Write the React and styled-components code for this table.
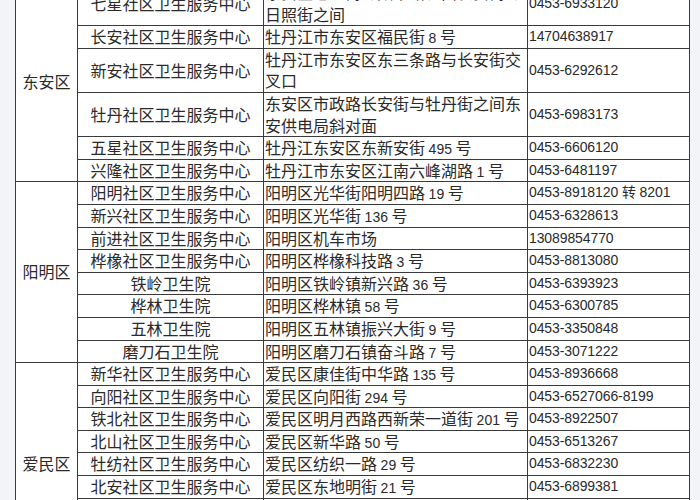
import React from "react";
import styled, { createGlobalStyle } from "styled-components";

const GlobalStyle = createGlobalStyle`
  html, body {
    margin: 0;
    padding: 0;
    background: #f3f4f7;
    overflow: hidden;
  }
`;

const Page = styled.div`
  width: 700px;
  height: 500px;
  overflow: hidden;
  background: #f3f4f7;
`;

const Sheet = styled.table`
  margin: -19px 0 0 15px;
  width: 674px;
  border-collapse: collapse;
  table-layout: fixed;
  background: #fff;
  color: #2a2a2a;
  font-family: "Noto Sans CJK SC", "Liberation Sans", sans-serif;
  font-size: 16px;
  line-height: 21.6px;
`;

const Col = styled.col`
  width: ${(props) => props.$w}px;
`;

const Cell = styled.td`
  border: 1px solid #3a3a3a;
  padding: 0 1px;
  vertical-align: middle;
  text-align: ${(props) => props.$align || "left"};
  white-space: ${(props) => (props.$nowrap ? "nowrap" : "normal")};
  overflow: hidden;
`;

const PhoneCell = styled(Cell)`
  font-family: "Liberation Sans", "Noto Sans CJK SC", sans-serif;
  font-size: 14px;
  letter-spacing: -0.1px;
`;

const Num = styled.span`
  font-family: "Liberation Sans", sans-serif;
  font-size: 14px;
  line-height: 1;
`;

const Glyph = styled.span`
  line-height: 1;
`;

const fmt = (text) =>
  text.split(/(\d[\d-]*)/).map((part, i) =>
    /^\d/.test(part) ? <Num key={i}>{part}</Num> : part
  );

const fmtPhone = (text) =>
  text.split(/([^\d\s-]+)/).map((part, i) =>
    /^[^\d\s-]/.test(part) ? <Glyph key={i}>{part}</Glyph> : part
  );

const districts = [
  {
    name: "东安区",
    rows: [
      ["七星社区卫生服务中心", "东安区七星街与太平路、西长安街与日照街之间", "0453-6933120"],
      ["长安社区卫生服务中心", "牡丹江市东安区福民街 8 号", "14704638917"],
      ["新安社区卫生服务中心", "牡丹江市东安区东三条路与长安街交叉口", "0453-6292612"],
      ["牡丹社区卫生服务中心", "东安区市政路长安街与牡丹街之间东安供电局斜对面", "0453-6983173"],
      ["五星社区卫生服务中心", "牡丹江东安区东新安街 495 号", "0453-6606120"],
      ["兴隆社区卫生服务中心", "牡丹江市东安区江南六峰湖路 1 号", "0453-6481197"],
    ],
  },
  {
    name: "阳明区",
    rows: [
      ["阳明社区卫生服务中心", "阳明区光华街阳明四路 19 号", "0453-8918120 转 8201"],
      ["新兴社区卫生服务中心", "阳明区光华街 136 号", "0453-6328613"],
      ["前进社区卫生服务中心", "阳明区机车市场", "13089854770"],
      ["桦橡社区卫生服务中心", "阳明区桦橡科技路 3 号", "0453-8813080"],
      ["铁岭卫生院", "阳明区铁岭镇新兴路 36 号", "0453-6393923"],
      ["桦林卫生院", "阳明区桦林镇 58 号", "0453-6300785"],
      ["五林卫生院", "阳明区五林镇振兴大街 9 号", "0453-3350848"],
      ["磨刀石卫生院", "阳明区磨刀石镇奋斗路 7 号", "0453-3071222"],
    ],
  },
  {
    name: "爱民区",
    rows: [
      ["新华社区卫生服务中心", "爱民区康佳街中华路 135 号", "0453-8936668"],
      ["向阳社区卫生服务中心", "爱民区向阳街 294 号", "0453-6527066-8199"],
      ["铁北社区卫生服务中心", "爱民区明月西路西新荣一道街 201 号", "0453-8922507"],
      ["北山社区卫生服务中心", "爱民区新华路 50 号", "0453-6513267"],
      ["牡纺社区卫生服务中心", "爱民区纺织一路 29 号", "0453-6832230"],
      ["北安社区卫生服务中心", "爱民区东地明街 21 号", "0453-6899381"],
      ["黄花社区卫生服务中心", "爱民区黄花路 18 号", "0453-6951620"],
      ["三道关社区卫生服务中心", "爱民区三道关镇 12 号", "0453-6260117"],
      ["北安乡卫生院", "爱民区北安乡 6 号", "0453-6711302"],
    ],
  },
];

export default function App() {
  return (
    <Page>
      <GlobalStyle />
      <Sheet>
        <colgroup>
          <Col $w={62} />
          <Col $w={186} />
          <Col $w={264} />
          <Col $w={162} />
        </colgroup>
        <tbody>
          {districts.map((d) =>
            d.rows.map((row, i) => (
              <tr key={d.name + i}>
                {i === 0 && (
                  <Cell $align="center" rowSpan={d.rows.length}>
                    {d.name}
                  </Cell>
                )}
                <Cell $align="center" $nowrap>
                  {row[0]}
                </Cell>
                <Cell>{fmt(row[1])}</Cell>
                <PhoneCell $nowrap>{fmtPhone(row[2])}</PhoneCell>
              </tr>
            ))
          )}
        </tbody>
      </Sheet>
    </Page>
  );
}
